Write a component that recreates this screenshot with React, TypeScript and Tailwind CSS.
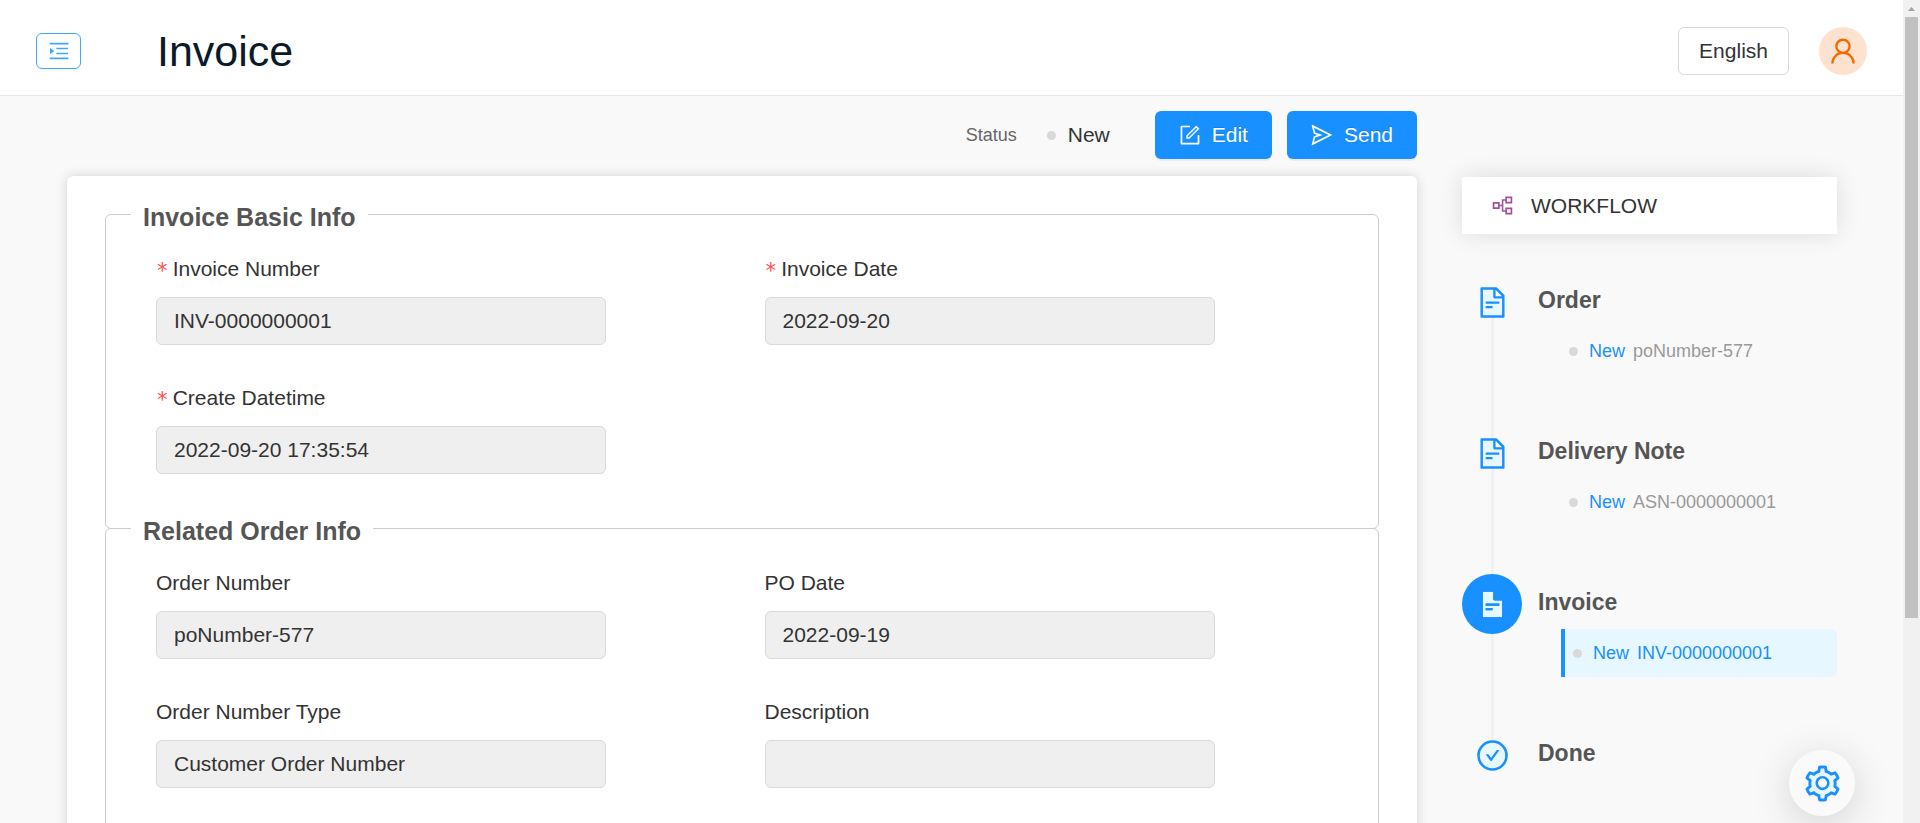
import type { ReactNode } from "react";
import {
  AiOutlineForm,
  AiOutlineMenuUnfold,
  AiOutlinePartition,
  AiOutlineSend,
  AiOutlineUser,
  AiTwotoneFileText,
  AiTwotoneSetting,
} from "react-icons/ai";

type Field = { id: string; label: string; value: string; required?: boolean };

type Step = {
  title: string;
  status?: string;
  number?: string;
  active?: boolean;
  done?: boolean;
};

const basicFields: Field[] = [
  { id: "invoiceNumber", label: "Invoice Number", value: "INV-0000000001", required: true },
  { id: "invoiceDate", label: "Invoice Date", value: "2022-09-20", required: true },
  { id: "createDatetime", label: "Create Datetime", value: "2022-09-20 17:35:54", required: true },
];

const orderFields: Field[] = [
  { id: "orderNumber", label: "Order Number", value: "poNumber-577" },
  { id: "poDate", label: "PO Date", value: "2022-09-19" },
  { id: "orderNumberType", label: "Order Number Type", value: "Customer Order Number" },
  { id: "description", label: "Description", value: "" },
];

const steps: Step[] = [
  { title: "Order", status: "New", number: "poNumber-577" },
  { title: "Delivery Note", status: "New", number: "ASN-0000000001" },
  { title: "Invoice", status: "New", number: "INV-0000000001", active: true },
  { title: "Done", done: true },
];

function Dot() {
  return <span className="size-[9px] shrink-0 rounded-full bg-[#d9d9d9]" />;
}

function CheckCircle() {
  return (
    <svg width="35" height="35" viewBox="0 0 1024 1024">
      <circle cx="512" cy="512" r="410" fill="#e6f7ff" stroke="#1890ff" strokeWidth="76" />
      <path
        fill="#1890ff"
        d="M699 353h-46.9c-10.2 0-19.9 4.9-25.9 13.3L469 584.3l-71.2-98.8c-6-8.3-15.6-13.3-25.9-13.3H325c-6.5 0-10.3 7.4-6.5 12.7l124.6 172.8a31.8 31.8 0 0 0 51.7 0l210.6-292c3.9-5.3.1-12.7-6.4-12.7z"
      />
    </svg>
  );
}

function PrimaryButton({ icon, children }: { icon: ReactNode; children: ReactNode }) {
  return (
    <button
      type="button"
      className="flex h-12 items-center gap-2.5 rounded-md bg-[#1890ff] pr-6 pl-[23px] text-white shadow-[0_2px_0_rgba(0,0,0,0.05)] [text-shadow:0_-1px_0_rgba(0,0,0,0.12)]">
      {icon}
      {children}
    </button>
  );
}

function Header() {
  return (
    <header className="flex items-center border-b border-[#e8e8e8] bg-white px-9 pt-[27px] pb-5">
      <button
        type="button"
        aria-label="Toggle menu"
        className="flex h-9 w-[45px] items-center justify-center rounded-md border border-[#40a9ff] text-[#40a9ff] shadow-[0_2px_0_rgba(0,0,0,0.02)]">
        <AiOutlineMenuUnfold size={24} />
      </button>
      <h1 className="ml-[76px] text-[43px] leading-[48px] text-[#0a1a2b]">Invoice</h1>
      <div className="ml-auto flex items-center gap-[30px]">
        <button
          type="button"
          className="h-12 rounded-md border border-[#d9d9d9] bg-white px-5 text-[#333]">
          English
        </button>
        <button
          type="button"
          aria-label="Account"
          className="flex size-12 items-center justify-center rounded-full bg-[#fde3cf] text-[#f56a00]">
          <AiOutlineUser size={32} />
        </button>
      </div>
    </header>
  );
}

function FormField({ id, label, value, required }: Field) {
  return (
    <div className="mb-[37px]">
      <label htmlFor={id} className="mb-3 flex h-8 items-center gap-1">
        {required && (
          <span className="pt-1 font-['DejaVu_Sans_Mono',monospace] leading-6 text-[#ff4d4f]">
            *
          </span>
        )}
        {label}
      </label>
      <input
        id={id}
        type="text"
        readOnly
        defaultValue={value}
        className="h-12 w-[74%] rounded-md border border-[#d9d9d9] bg-[#efefef] px-[17px]"
      />
    </div>
  );
}

function Section({ title, fields }: { title: string; fields: Field[] }) {
  return (
    <fieldset className="-mt-5 rounded-md border border-[#ccc]">
      <legend className="ml-[25px] bg-white px-3 pt-1.5 text-[25px] leading-[33px] font-bold text-[#555]">
        {title}
      </legend>
      <div className="grid grid-cols-2 pt-[19px] pr-[5px] pb-[17px] pl-[50px]">
        {fields.map((field) => (
          <FormField key={field.id} {...field} />
        ))}
      </div>
    </fieldset>
  );
}

function StepIcon({ active, done }: { active?: boolean; done?: boolean }) {
  return (
    <span
      className={
        active
          ? "relative flex size-[60px] shrink-0 items-center justify-center rounded-full bg-[#1890ff]"
          : "relative flex size-[60px] shrink-0 items-center justify-center"
      }>
      {done ? (
        <CheckCircle />
      ) : (
        <AiTwotoneFileText size={35} className="text-[#1890ff] [&>path[fill]]:fill-[#e6f7ff]" />
      )}
    </span>
  );
}

function WorkflowStep({ title, status, number, active, done }: Step) {
  return (
    <li className="relative flex h-[151px] gap-4">
      {/* connector to the next step, runs behind the icons */}
      {!done && <span className="absolute top-[30px] left-[29px] h-full w-[3px] bg-[#f0f0f0]" />}
      <StepIcon active={active} done={done} />
      <div className="flex-1">
        <h3 className="-mb-0.5 text-[23px] leading-[57px] font-bold text-[#555]">{title}</h3>
        {number && (
          <a
            href="#"
            className={
              active
                ? "ml-[23px] flex h-12 items-center rounded-r-md border-l-4 border-[#1890ff] bg-[#e6f7ff] pl-2 text-[18px] text-[#1890ff]"
                : "ml-[23px] flex h-12 items-center pl-2 text-[18px] text-[#999]"
            }>
            <Dot />
            <span className="ml-[11px] text-[#1890ff]">{status}</span>
            <span className="ml-2">{number}</span>
          </a>
        )}
      </div>
    </li>
  );
}

function Workflow() {
  return (
    <aside className="mt-[81px] w-[375px] shrink-0">
      <h2 className="flex h-[57px] items-center gap-4 bg-white pl-7 shadow-[0_0_24px_rgba(0,0,0,0.12)]">
        <AiOutlinePartition size={25} className="text-[#a0509a]" />
        WORKFLOW
      </h2>
      <ol className="mt-[38px]">
        {steps.map((step) => (
          <WorkflowStep key={step.title} {...step} />
        ))}
      </ol>
    </aside>
  );
}

function Scrollbar() {
  return (
    <div className="flex w-[17px] shrink-0 flex-col items-center bg-[#f1f1f1]">
      <div className="flex h-[17px] items-center">
        <svg width="7" height="4" viewBox="0 0 7 4" className="fill-[#a3a3a3]">
          <path d="M3.5 0 7 4H0z" />
        </svg>
      </div>
      <div className="h-[73%] w-[13px] bg-[#c1c1c1]" />
    </div>
  );
}

export default function App() {
  return (
    <div className="flex h-screen overflow-hidden bg-[#f9f9f9] font-['Liberation_Sans',Arial,sans-serif] text-[21px] text-[#333]">
      <div className="min-w-0 flex-1">
        <Header />
        <div className="flex gap-[45px] pr-[66px] pl-[67px]">
          <main className="min-w-0 flex-1">
            <div className="flex items-center justify-end pt-[15px] pb-[17px]">
              <span className="mr-[30px] text-[18px] text-[#666]">Status</span>
              <Dot />
              <span className="mr-[45px] ml-3">New</span>
              <div className="flex gap-[15px]">
                <PrimaryButton icon={<AiOutlineForm size={24} />}>Edit</PrimaryButton>
                <PrimaryButton icon={<AiOutlineSend size={24} />}>Send</PrimaryButton>
              </div>
            </div>
            <form className="rounded-md bg-white px-[38px] pt-[39px] pb-[38px] shadow-[0_0_12px_rgba(0,0,0,0.16)]">
              <Section title="Invoice Basic Info" fields={basicFields} />
              <Section title="Related Order Info" fields={orderFields} />
            </form>
          </main>
          <Workflow />
        </div>
      </div>
      <Scrollbar />
      <button
        type="button"
        aria-label="Settings"
        className="fixed right-[65px] bottom-[7px] flex size-[66px] items-center justify-center rounded-full bg-[#fafafa] shadow-[0_8px_40px_rgba(0,0,0,0.16)]">
        <AiTwotoneSetting size={41} className="text-[#1890ff] [&>path[fill]]:fill-[#e6f7ff]" />
      </button>
    </div>
  );
}
